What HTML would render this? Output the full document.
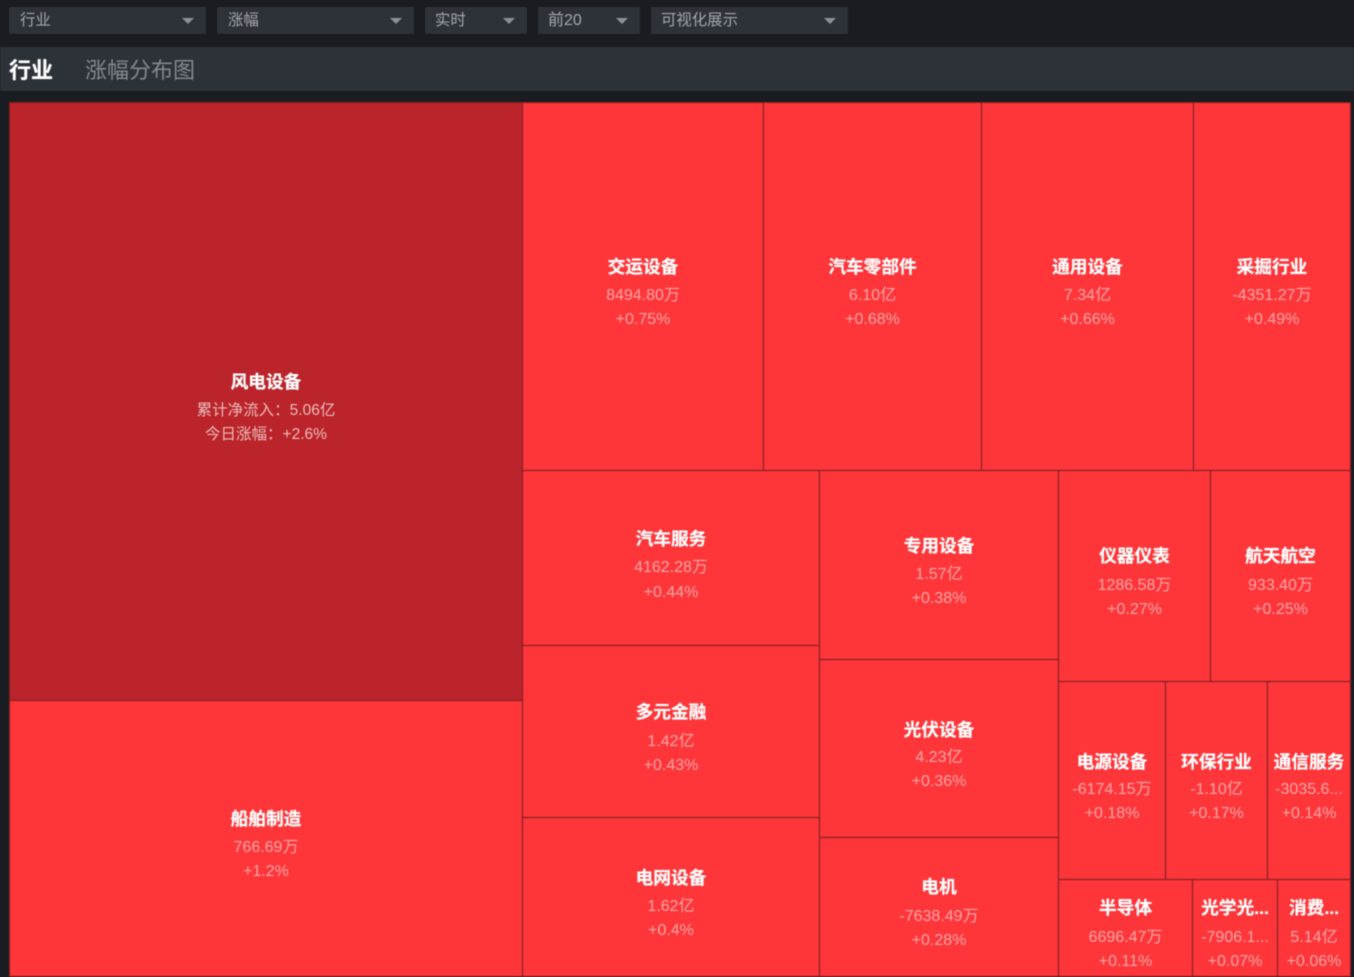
<!DOCTYPE html>
<html lang="zh">
<head>
<meta charset="utf-8">
<title>行业涨幅分布图</title>
<style>
html,body{margin:0;padding:0;width:1354px;height:977px;overflow:hidden;background:#191c20;}
body{font-family:"Liberation Sans","Noto Sans CJK SC",sans-serif;position:relative;}
#w{position:absolute;left:0;top:0;width:1354px;height:977px;filter:blur(.45px);}
.s{position:absolute;top:7px;height:27px;background:#2d3239;color:#a5a8ad;font-size:15.4px;line-height:27px;box-sizing:border-box;padding-left:10px;}
.s i{position:absolute;right:12px;top:11px;width:0;height:0;border-left:6px solid transparent;border-right:6px solid transparent;border-top:6px solid #8d9197;}
.bar{position:absolute;left:0;top:47px;width:1354px;height:44px;background:#2d3239;}
.t1{position:absolute;left:9px;top:56px;font-size:22px;line-height:30px;font-weight:bold;color:#fff;text-shadow:0 0 .6px #fff;}
.t2{position:absolute;left:85px;top:56px;font-size:22px;line-height:30px;color:#84888e;}
.c{position:absolute;background:#fe363a;box-shadow:inset 0 0 1px 1px #7f2023;}
.d{background:#bb242a;}
.c div{position:absolute;left:0;right:0;text-align:center;white-space:nowrap;}
.n{font-size:17.7px;line-height:24px;font-weight:bold;color:#fff;margin-top:1px;text-shadow:0 0 .6px #fff;}
.v{font-size:16px;line-height:24px;color:#fca5a6;margin-top:2px;}
.d .v{color:#e9bcbd;font-size:15.5px;}
</style>
</head>
<body>
<div id="w">
<div class="s" style="left:9px;width:197px;padding-left:11px">行业<i></i></div>
<div class="s" style="left:217px;width:197px;padding-left:11px">涨幅<i></i></div>
<div class="s" style="left:425px;width:102px">实时<i></i></div>
<div class="s" style="left:538px;width:102px;font-size:16px">前20<i></i></div>
<div class="s" style="left:651px;width:197px">可视化展示<i></i></div>
<div class="bar"></div>
<div class="t1">行业</div>
<div class="t2">涨幅分布图</div>

<div class="c d" style="left:9px;top:102px;width:514px;height:599px"><div class="n" style="top:267px">风电设备</div><div class="v" style="top:295px">累计净流入：5.06亿</div><div class="v" style="top:319px">今日涨幅：+2.6%</div></div>
<div class="c" style="left:9px;top:700px;width:514px;height:277px"><div class="n" style="top:106px">船舶制造</div><div class="v" style="top:134px">766.69万</div><div class="v" style="top:158px">+1.2%</div></div>

<div class="c" style="left:522px;top:102px;width:242px;height:369px"><div class="n" style="top:152px">交运设备</div><div class="v" style="top:180px">8494.80万</div><div class="v" style="top:204px">+0.75%</div></div>
<div class="c" style="left:763px;top:102px;width:219px;height:369px"><div class="n" style="top:152px">汽车零部件</div><div class="v" style="top:180px">6.10亿</div><div class="v" style="top:204px">+0.68%</div></div>
<div class="c" style="left:981px;top:102px;width:213px;height:369px"><div class="n" style="top:152px">通用设备</div><div class="v" style="top:180px">7.34亿</div><div class="v" style="top:204px">+0.66%</div></div>
<div class="c" style="left:1193px;top:102px;width:158px;height:369px"><div class="n" style="top:152px">采掘行业</div><div class="v" style="top:180px">-4351.27万</div><div class="v" style="top:204px">+0.49%</div></div>

<div class="c" style="left:522px;top:470px;width:298px;height:176px"><div class="n" style="top:56px">汽车服务</div><div class="v" style="top:84px">4162.28万</div><div class="v" style="top:109px">+0.44%</div></div>
<div class="c" style="left:522px;top:645px;width:298px;height:173px"><div class="n" style="top:54px">多元金融</div><div class="v" style="top:83px">1.42亿</div><div class="v" style="top:107px">+0.43%</div></div>
<div class="c" style="left:522px;top:817px;width:298px;height:160px"><div class="n" style="top:48px">电网设备</div><div class="v" style="top:76px">1.62亿</div><div class="v" style="top:100px">+0.4%</div></div>

<div class="c" style="left:819px;top:470px;width:240px;height:190px"><div class="n" style="top:63px">专用设备</div><div class="v" style="top:91px">1.57亿</div><div class="v" style="top:115px">+0.38%</div></div>
<div class="c" style="left:819px;top:659px;width:240px;height:179px"><div class="n" style="top:58px">光伏设备</div><div class="v" style="top:85px">4.23亿</div><div class="v" style="top:109px">+0.36%</div></div>
<div class="c" style="left:819px;top:837px;width:240px;height:140px"><div class="n" style="top:37px">电机</div><div class="v" style="top:66px">-7638.49万</div><div class="v" style="top:90px">+0.28%</div></div>

<div class="c" style="left:1058px;top:470px;width:153px;height:212px"><div class="n" style="top:73px">仪器仪表</div><div class="v" style="top:102px">1286.58万</div><div class="v" style="top:126px">+0.27%</div></div>
<div class="c" style="left:1210px;top:470px;width:141px;height:212px"><div class="n" style="top:73px">航天航空</div><div class="v" style="top:102px">933.40万</div><div class="v" style="top:126px">+0.25%</div></div>

<div class="c" style="left:1058px;top:681px;width:108px;height:199px"><div class="n" style="top:68px">电源设备</div><div class="v" style="top:95px">-6174.15万</div><div class="v" style="top:119px">+0.18%</div></div>
<div class="c" style="left:1165px;top:681px;width:103px;height:199px"><div class="n" style="top:68px">环保行业</div><div class="v" style="top:95px">-1.10亿</div><div class="v" style="top:119px">+0.17%</div></div>
<div class="c" style="left:1267px;top:681px;width:84px;height:199px"><div class="n" style="top:68px">通信服务</div><div class="v" style="top:95px">-3035.6...</div><div class="v" style="top:119px">+0.14%</div></div>

<div class="c" style="left:1058px;top:879px;width:135px;height:98px"><div class="n" style="top:16px">半导体</div><div class="v" style="top:45px">6696.47万</div><div class="v" style="top:69px">+0.11%</div></div>
<div class="c" style="left:1192px;top:879px;width:86px;height:98px"><div class="n" style="top:16px">光学光...</div><div class="v" style="top:45px">-7906.1...</div><div class="v" style="top:69px">+0.07%</div></div>
<div class="c" style="left:1277px;top:879px;width:74px;height:98px"><div class="n" style="top:16px">消费...</div><div class="v" style="top:45px">5.14亿</div><div class="v" style="top:69px">+0.06%</div></div>
</div>
</body>
</html>
